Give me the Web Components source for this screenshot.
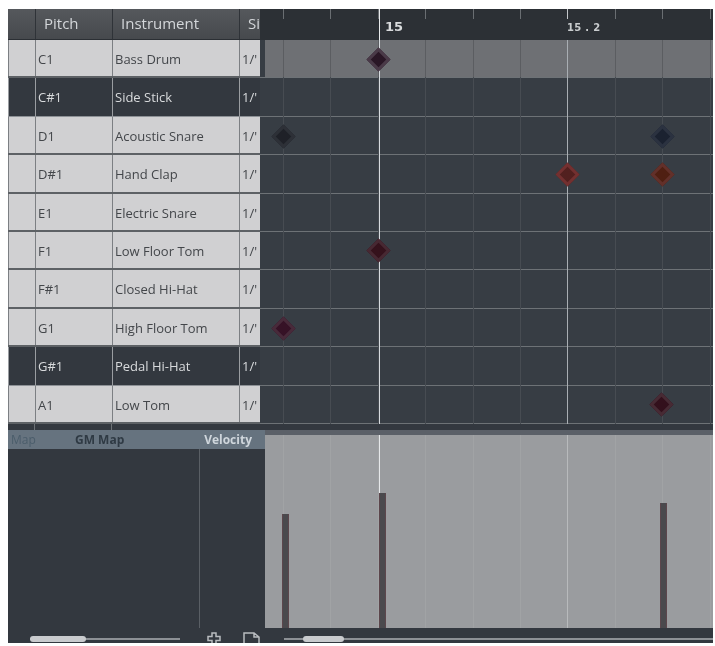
<!DOCTYPE html>
<html>
<head>
<meta charset="utf-8">
<style>
  html, body { margin: 0; background: #fff; }
  body { padding: 9px 2px 3px 8px; font-family: "Open Sans", "Liberation Sans", sans-serif; }
</style>
</head>
<body>
<drum-editor>
  <drum-row slot="rows" pitch="C1" name="Bass Drum"></drum-row>
  <drum-row slot="rows" pitch="C#1" name="Side Stick" dark></drum-row>
  <drum-row slot="rows" pitch="D1" name="Acoustic Snare"></drum-row>
  <drum-row slot="rows" pitch="D#1" name="Hand Clap"></drum-row>
  <drum-row slot="rows" pitch="E1" name="Electric Snare"></drum-row>
  <drum-row slot="rows" pitch="F1" name="Low Floor Tom"></drum-row>
  <drum-row slot="rows" pitch="F#1" name="Closed Hi-Hat"></drum-row>
  <drum-row slot="rows" pitch="G1" name="High Floor Tom"></drum-row>
  <drum-row slot="rows" pitch="G#1" name="Pedal Hi-Hat" dark></drum-row>
  <drum-row slot="rows" pitch="A1" name="Low Tom"></drum-row>

  <drum-note slot="notes" x="118.5" y="19.5" color="#2a1726" edge="#4a3a48"></drum-note>
  <drum-note slot="notes" x="23" y="96" color="#1f2128" edge="#2d3037"></drum-note>
  <drum-note slot="notes" x="402" y="96" color="#1b2230" edge="#2b3240"></drum-note>
  <drum-note slot="notes" x="307" y="134" color="#52201f" edge="#733030"></drum-note>
  <drum-note slot="notes" x="402" y="134" color="#4f1f12" edge="#62302a"></drum-note>
  <drum-note slot="notes" x="118.5" y="210" color="#35121c" edge="#472832"></drum-note>
  <drum-note slot="notes" x="23" y="288" color="#361226" edge="#482a3a"></drum-note>
  <drum-note slot="notes" x="401" y="364" color="#33101c" edge="#472a34"></drum-note>
</drum-editor>

<script>
class DrumEditor extends HTMLElement {
  connectedCallback() {
    this.attachShadow({ mode: 'open' });
    this.shadowRoot.innerHTML = `
      <style>
        :host { display: block; width: 705px; height: 634px; background: #33383f; overflow: hidden; filter: blur(.45px); }
        .top { display: grid; grid-template-columns: 252px 453px; }
        .head {
          display: grid; grid-template-columns: 27px 77px 127px 21px; height: 31px;
          background: linear-gradient(#55585c, #46494d); color: #d4d7da; font-size: 15px; overflow: hidden;
          border-bottom: 1px solid #2b2f34; box-sizing: border-box;
        }
        .head span { border-left: 1px solid #2f3338; padding-left: 8px; line-height: 28px; white-space: nowrap; overflow: hidden; }
        .head span:first-child { border: 0; }
        .rows { display: flex; flex-direction: column; height: 384px; }
        .roll { position: relative; height: 384px; background-color: #373d44;
          background-image:
            repeating-linear-gradient(90deg, transparent 0 23px, #474c52 23px 24px, transparent 24px 47.4px),
            repeating-linear-gradient(180deg, transparent 0 37.4px, #6d7276 37.4px 38.4px);
        }
        .current { position: absolute; left: 5px; right: 0; top: 0; height: 37px; background: #6e7074; }
        .current-grid { position: absolute; inset: 0 0 auto 0; height: 37px;
          background: repeating-linear-gradient(90deg, transparent 0 23px, #5b5d61 23px 24px, transparent 24px 47.4px); }
        .beat { position: absolute; top: 0; bottom: 0; width: 1px; background: #d6dade; }
        .beat.soft { background: #a9aeb3; }
        .gap { display: grid; grid-template-columns: 27px 77px 1fr; height: 6px; }
        .gap i { border-right: 1px solid #6d7276; }
        .lower { display: grid; grid-template-columns: 257px 448px; height: 213px; }
        .vel-left { display: grid; grid-template-rows: 19px 1fr 15px; }
        .vel-right { display: grid; grid-template-rows: 5px 193px 15px; }
        .vel-right .top-strip { background: #5b6068; }
      </style>
      <div class="top">
        <div>
          <div class="head"><span></span><span>Pitch</span><span>Instrument</span><span>Si</span></div>
          <div class="rows"><slot name="rows"></slot></div>
        </div>
        <div>
          <time-ruler></time-ruler>
          <div class="roll">
            <div class="current"></div>
            <div class="current-grid"></div>
            <div class="beat" style="left:119px"></div>
            <div class="beat soft" style="left:307px"></div>
            <slot name="notes"></slot>
          </div>
        </div>
      </div>
      <div class="gap"><i></i><i></i></div>
      <div class="lower">
        <div class="vel-left">
          <controller-head></controller-head>
          <controller-list></controller-list>
          <scroll-strip left="22" width="56" track="150">
            <tool-icons></tool-icons>
          </scroll-strip>
        </div>
        <div class="vel-right">
          <div class="top-strip"></div>
          <velocity-lane></velocity-lane>
          <scroll-strip left="38" width="41" track="430" pad="19"></scroll-strip>
        </div>
      </div>`;
  }
}

class DrumRow extends HTMLElement {
  connectedCallback() {
    const dark = this.hasAttribute('dark');
    this.attachShadow({ mode: 'open' });
    this.shadowRoot.innerHTML = `
      <style>
        :host {
          display: grid; grid-template-columns: 27px 77px 127px 21px; height: 38.4px; box-sizing: border-box;
          background: ${dark ? '#33383f' : '#d0d0d2'}; color: ${dark ? '#d8dadc' : '#43464a'};
          border-bottom: ${dark ? '1px solid #8d9196' : '2px solid #5d6165'}; font-size: 13px;
        }
        span { border-left: 1px solid ${dark ? '#9a9da1' : '#7c7f83'}; padding-left: 2px; line-height: 39px; white-space: nowrap; overflow: hidden; }
        span:first-child { border: 0; }
      </style>
      <span></span><span>${this.getAttribute('pitch')}</span><span>${this.getAttribute('name')}</span><span>1/'</span>`;
  }
}

class TimeRuler extends HTMLElement {
  connectedCallback() {
    this.attachShadow({ mode: 'open' });
    this.shadowRoot.innerHTML = `
      <style>
        :host {
          display: block; position: relative; height: 31px; box-sizing: border-box; color: #d9dbdd;
          background-color: #2c3035;
          background-image: repeating-linear-gradient(90deg, transparent 0 23px, #6a6e72 23px 24px, transparent 24px 47.4px);
          background-size: 100% 10px; background-repeat: no-repeat;
          font-family: "DejaVu Sans", sans-serif; font-weight: 700;
        }
        .bar { position: absolute; top: 0; width: 1px; background: #e8eaec; }
        b { position: absolute; top: 10px; line-height: 16px; }
      </style>
      <div class="bar" style="left:119px;height:31px"></div>
      <b style="left:125px;font-size:13px">15</b>
      <div class="bar" style="left:307px;height:10px;background:#c4c7ca"></div>
      <b style="left:307px;top:11px;font-size:10px;letter-spacing:.3px;color:#c9ccce">15 . 2</b>`;
  }
}

class DrumNote extends HTMLElement {
  connectedCallback() {
    const edge = this.getAttribute('edge');
    this.attachShadow({ mode: 'open' });
    this.shadowRoot.innerHTML = `
      <style>
        :host {
          position: absolute; left: ${this.getAttribute('x') - 8.5}px; top: ${this.getAttribute('y') - 8.5}px;
          width: 17px; height: 17px; transform: rotate(45deg); box-sizing: border-box;
          background: ${this.getAttribute('color')}; border: 3px solid ${edge};
        }
      </style>`;
  }
}

class ControllerHead extends HTMLElement {
  connectedCallback() {
    this.attachShadow({ mode: 'open' });
    this.shadowRoot.innerHTML = `
      <style>
        :host { display: flex; align-items: center; background: #66737f; font-size: 12px; font-weight: 700; color: #2f3a44; height: 19px; line-height: 19px; }
        .map { width: 67px; padding-left: 3px; box-sizing: border-box; color: #4b5d6b; font-weight: 400; }
        .gm { flex: 1; }
        .vel { color: #cfd6dc; padding-right: 13px; }
      </style>
      <span class="map">Map</span><span class="gm">GM Map</span><span class="vel">Velocity</span>`;
  }
}

class ControllerList extends HTMLElement {
  connectedCallback() {
    this.attachShadow({ mode: 'open' });
    this.shadowRoot.innerHTML = `
      <style>
        :host { display: grid; grid-template-columns: 192px 1fr; background: #33383f; }
        i { border-right: 1px solid #5a5f65; }
      </style>
      <i></i>`;
  }
}

class ScrollStrip extends HTMLElement {
  connectedCallback() {
    const left = this.getAttribute('left'), width = this.getAttribute('width');
    const track = this.getAttribute('track'), pad = this.getAttribute('pad') || 22;
    this.attachShadow({ mode: 'open' });
    this.shadowRoot.innerHTML = `
      <style>
        :host { display: flex; align-items: center; height: 15px; padding-left: ${pad - 0}px; background: #33383f; overflow: hidden; }
        .track { position: relative; width: ${track}px; height: 2px; margin-top: 6px; background: #8c9095; flex: none; }
        .thumb { position: absolute; left: ${left - pad}px; width: ${width}px; top: -2px; height: 6px; border-radius: 3px; background: #c9cbce; }
      </style>
      <div class="track"><div class="thumb"></div></div><slot></slot>`;
  }
}

class ToolIcons extends HTMLElement {
  connectedCallback() {
    this.attachShadow({ mode: 'open' });
    this.shadowRoot.innerHTML = `
      <style>
        :host { display: flex; gap: 22px; margin-left: 27px; margin-top: 6px; }
        svg { display: block; fill: none; stroke: #b9bcc0; stroke-width: 1.5; }
      </style>
      <svg width="14" height="13" viewBox="0 0 14 13"><path d="M5 1h4v3.500h4v4H9V13H5V8.500H1v-4h4z"/></svg>
      <svg width="17" height="13" viewBox="0 0 17 13"><path d="M1 13V1h10l5 4v8M11 1v4h5"/></svg>`;
  }
}

class VelocityLane extends HTMLElement {
  connectedCallback() {
    const bars = [[17, 114], [114, 135], [395, 125]];
    this.attachShadow({ mode: 'open' });
    this.shadowRoot.innerHTML = `
      <style>
        :host {
          display: block; position: relative; background-color: #9a9c9f;
          background-image: repeating-linear-gradient(90deg, transparent 0 18px, #a1a3a5 18px 19px, transparent 19px 47.4px);
        }
        .line { position: absolute; top: 0; bottom: 0; width: 1px; }
        .bar { position: absolute; bottom: 0; width: 7px; box-sizing: border-box; background: #4a494d; border-left: 1px solid #5c464c; border-right: 1px solid #5c464c; }
      </style>
      <div class="line" style="left:114px;height:58px;bottom:auto;background:#e6e8ea"></div>
      <div class="line" style="left:302px;background:#b8babc"></div>
      ${bars.map(([x, h]) => `<div class="bar" style="left:${x}px;height:${h}px"></div>`).join('')}`;
  }
}

customElements.define('drum-editor', DrumEditor);
customElements.define('drum-row', DrumRow);
customElements.define('time-ruler', TimeRuler);
customElements.define('drum-note', DrumNote);
customElements.define('controller-head', ControllerHead);
customElements.define('controller-list', ControllerList);
customElements.define('scroll-strip', ScrollStrip);
customElements.define('tool-icons', ToolIcons);
customElements.define('velocity-lane', VelocityLane);
</script>
</body>
</html>
